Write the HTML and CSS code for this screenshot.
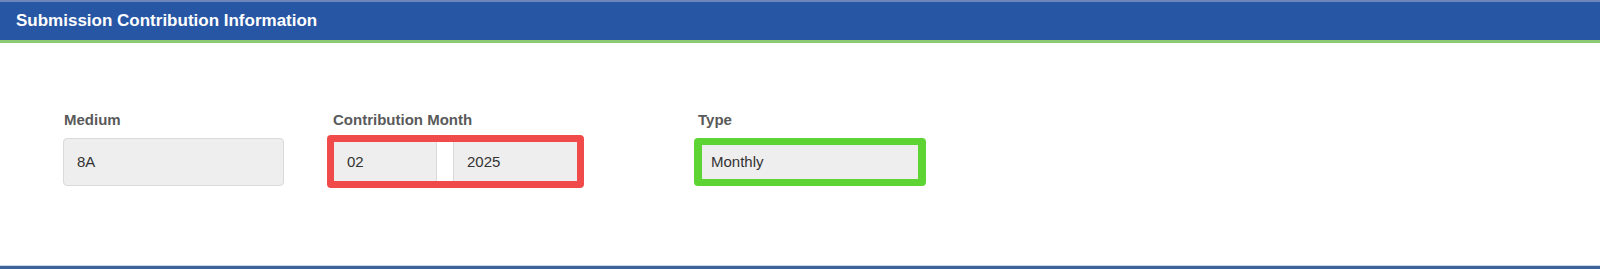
FILE: index.html
```html
<!DOCTYPE html>
<html lang="en">

<head>
    <meta charset="UTF-8">
    <meta name="viewport" content="width=device-width, initial-scale=1.0">
    <title>Submission Contribution Information</title>
    <link rel="stylesheet" href="styles.css">
</head>

<body>

    <div class="panel-header">
        <h1>Submission Contribution Information</h1>
    </div>

    <div class="panel-body">
        <div class="field field-medium">
            <label>Medium</label>
            <div class="input-box">8A</div>
        </div>

        <div class="field field-month">
            <label>Contribution Month</label>
            <div class="input-row mark-red">
                <div class="input-box month-box">02</div>
                <div class="input-box year-box">2025</div>
            </div>
        </div>

        <div class="field field-type">
            <label>Type</label>
            <div class="input-box mark-green">Monthly</div>
        </div>
    </div>

    <div class="panel-footer"></div>

</body>

</html>
```

FILE: styles.css
```css
body {
    margin: 0;
    font-family: 'Liberation Sans', Arial, sans-serif;
    background-color: #fff;
}

.panel-header {
    background-color: #2756a4;
    border-top: 2px solid #6d86bb;
    border-bottom: 3px solid #8cc972;
    height: 43px;
    box-sizing: border-box;
    padding: 9px 0 0 16px;
}

.panel-header h1 {
    margin: 0;
    color: #fff;
    font-size: 17px;
    line-height: 20px;
    font-weight: bold;
}

.panel-body {
    display: flex;
    padding: 68px 0 79px 63px;
}

.field label {
    display: block;
    color: #5a5a5a;
    font-size: 15px;
    font-weight: bold;
    line-height: 18px;
    margin-bottom: 9px;
    padding-left: 1px;
}

.field-medium {
    width: 221px;
    margin-right: 48px;
}

.field-month {
    width: 249px;
    margin-right: 116px;
}

.field-type {
    width: 226px;
}

.input-box {
    height: 48px;
    box-sizing: border-box;
    background-color: #eee;
    border: 1px solid #dadada;
    border-radius: 4px;
    color: #333;
    font-size: 15px;
    line-height: 46px;
    padding-left: 13px;
}

.input-row {
    display: flex;
    gap: 16px;
}

.month-box {
    width: 105px;
    padding-left: 14px;
}

.year-box {
    flex: 1;
}

/* hand drawn highlight marks over the fields */
.mark-red,
.mark-green {
    position: relative;
}

.mark-red::after {
    content: '';
    position: absolute;
    top: -3px;
    bottom: -2px;
    left: -5px;
    right: -3px;
    border: 7px solid #f04a4a;
    border-radius: 4px;
}

.mark-green::after {
    content: '';
    position: absolute;
    top: -1px;
    bottom: -1px;
    left: -4px;
    right: -4px;
    border: 7px solid #5ed434;
    border-left-width: 8px;
    border-right-width: 8px;
    border-radius: 4px;
}

.panel-footer {
    height: 3px;
    background-color: #3d6399;
    border-top: 1px solid #c8d8ea;
}
```
